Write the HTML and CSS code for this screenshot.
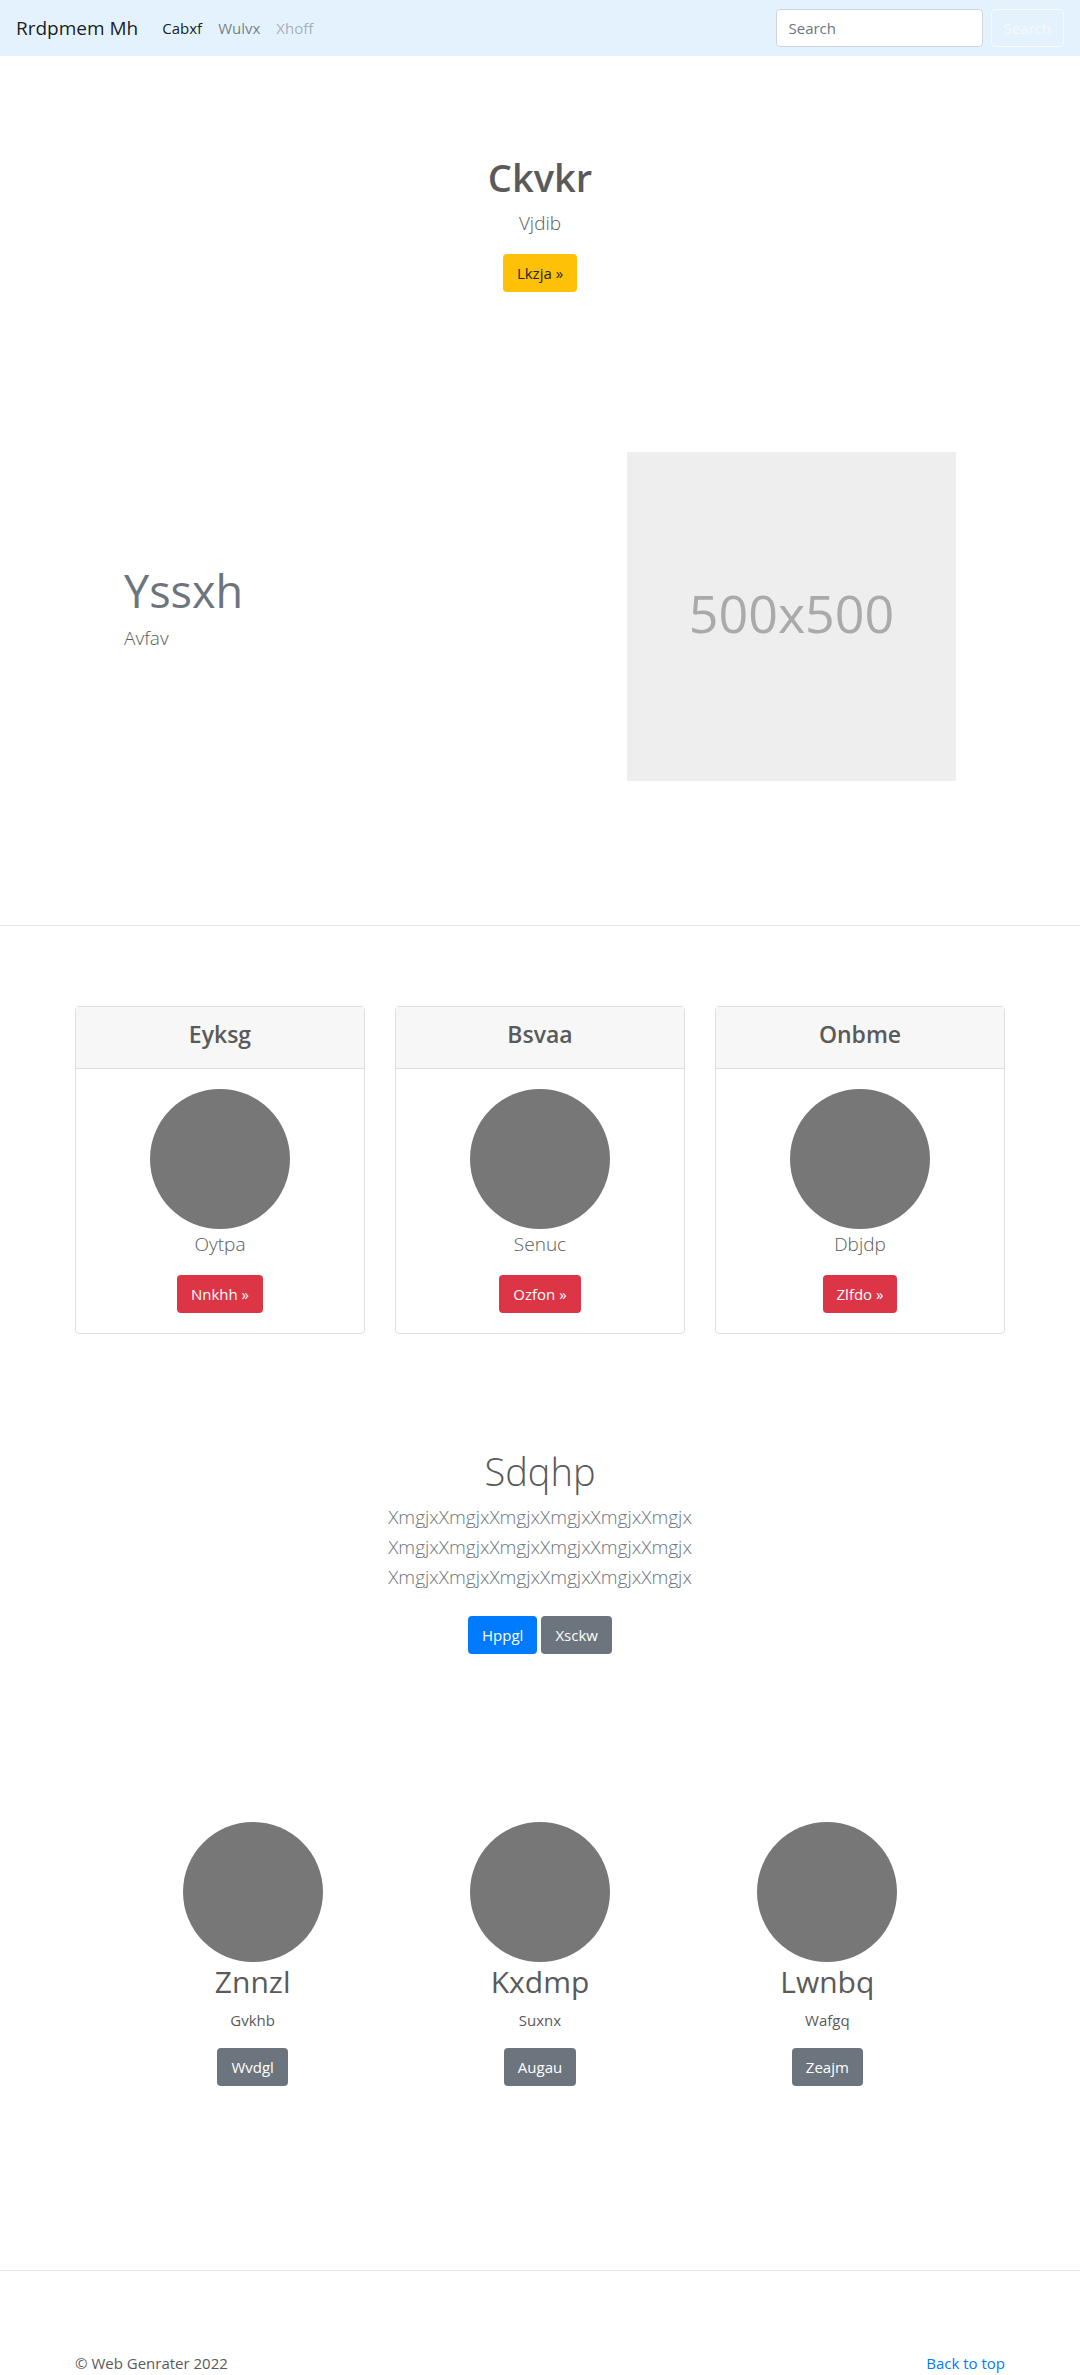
FILE: index.html
```html
<!DOCTYPE html>
<html lang="en">
<head>
  <meta charset="utf-8">
  <meta name="viewport" content="width=device-width, initial-scale=1">
  <title>Rrdpmem Mh</title>
  <link rel="stylesheet" href="styles.css">
</head>
<body id="top">
  <header class="navbar">
    <a class="brand" href="#top">Rrdpmem Mh</a>
    <nav class="nav">
      <a class="nav-link nav-link-active" href="#">Cabxf</a>
      <a class="nav-link" href="#">Wulvx</a>
      <a class="nav-link nav-link-disabled" href="#">Xhoff</a>
    </nav>
    <form class="search">
      <input class="search-input" type="search" placeholder="Search" aria-label="Search">
      <button class="btn btn-outline" type="button">Search</button>
    </form>
  </header>

  <main>
    <section class="hero">
      <h1 class="title title-bold">Ckvkr</h1>
      <p class="lead">Vjdib</p>
      <button class="btn btn-warning" type="button">Lkzja »</button>
    </section>

    <section class="feature">
      <div class="feature-text">
        <h2 class="feature-title">Yssxh</h2>
        <p class="lead">Avfav</p>
      </div>
      <div class="placeholder">500x500</div>
    </section>

    <hr class="divider">

    <section class="cards">
      <article class="card">
        <header class="card-header"><h4 class="card-title">Eyksg</h4></header>
        <div class="card-body">
          <div class="circle"></div>
          <p class="lead">Oytpa</p>
          <button class="btn btn-danger" type="button">Nnkhh »</button>
        </div>
      </article>
      <article class="card">
        <header class="card-header"><h4 class="card-title">Bsvaa</h4></header>
        <div class="card-body">
          <div class="circle"></div>
          <p class="lead">Senuc</p>
          <button class="btn btn-danger" type="button">Ozfon »</button>
        </div>
      </article>
      <article class="card">
        <header class="card-header"><h4 class="card-title">Onbme</h4></header>
        <div class="card-body">
          <div class="circle"></div>
          <p class="lead">Dbjdp</p>
          <button class="btn btn-danger" type="button">Zlfdo »</button>
        </div>
      </article>
    </section>

    <section class="album">
      <h1 class="title title-light">Sdqhp</h1>
      <p class="lead lead-muted">XmgjxXmgjxXmgjxXmgjxXmgjxXmgjx<br>XmgjxXmgjxXmgjxXmgjxXmgjxXmgjx<br>XmgjxXmgjxXmgjxXmgjxXmgjxXmgjx</p>
      <div class="actions">
        <button class="btn btn-primary" type="button">Hppgl</button>
        <button class="btn btn-secondary" type="button">Xsckw</button>
      </div>
    </section>

    <section class="columns">
      <div class="column">
        <div class="circle"></div>
        <h2 class="column-title">Znnzl</h2>
        <p class="text">Gvkhb</p>
        <button class="btn btn-secondary" type="button">Wvdgl</button>
      </div>
      <div class="column">
        <div class="circle"></div>
        <h2 class="column-title">Kxdmp</h2>
        <p class="text">Suxnx</p>
        <button class="btn btn-secondary" type="button">Augau</button>
      </div>
      <div class="column">
        <div class="circle"></div>
        <h2 class="column-title">Lwnbq</h2>
        <p class="text">Wafgq</p>
        <button class="btn btn-secondary" type="button">Zeajm</button>
      </div>
    </section>
  </main>

  <hr class="divider">

  <footer class="footer">
    <span>© Web Genrater 2022</span>
    <a class="footer-link" href="#top">Back to top</a>
  </footer>
</body>
</html>
```
FILE: styles.css
```css
* {
  box-sizing: border-box;
}

body {
  margin: 0;
  background: #fff;
  color: #5a5a5a;
  font-family: "Open Sans", "Noto Sans", sans-serif;
  font-size: 15px;
  line-height: 24px;
}

h1, h2, h4, p {
  margin: 0;
}

a {
  text-decoration: none;
}

/* Navigation bar */
.navbar {
  display: flex;
  align-items: center;
  padding: 9px 16px;
  background: #e3f2fd;
}

.brand {
  margin-right: 16px;
  color: rgba(0, 0, 0, 0.9);
  font-size: 19px;
  line-height: 30px;
}

.nav {
  display: flex;
}

.nav-link {
  padding: 0 8px;
  color: rgba(0, 0, 0, 0.5);
}

.nav-link-active {
  color: rgba(0, 0, 0, 0.9);
}

.nav-link-disabled {
  color: rgba(0, 0, 0, 0.3);
}

.search {
  display: flex;
  gap: 8px;
  margin-left: auto;
}

.search-input {
  width: 207px;
  height: 38px;
  padding: 6px 12px;
  border: 1px solid #ced4da;
  border-radius: 4px;
  background: #fff;
  color: #495057;
  font: inherit;
  appearance: none;
}

.search-input::placeholder {
  color: #6c757d;
  opacity: 1;
}

/* Buttons */
.btn {
  padding: 6px 13px;
  border: 1px solid transparent;
  border-radius: 4px;
  color: #fff;
  font: inherit;
  cursor: pointer;
}

.btn-outline {
  padding: 6px 12px;
  border-color: #f8f9fa;
  background: transparent;
  color: #f8f9fa;
}

.btn-warning {
  background: #ffc107;
  color: #212529;
}

.btn-danger {
  background: #dc3545;
}

.btn-primary {
  background: #007bff;
}

.btn-secondary {
  background: #6c757d;
}

/* Shared text */
.title {
  margin-bottom: 6px;
  font-size: 38px;
  line-height: 50px;
}

.title-bold {
  font-weight: 600;
}

.title-light {
  font-weight: 300;
}

.lead {
  margin-bottom: 16px;
  font-size: 19px;
  font-weight: 300;
  line-height: 30px;
}

.lead-muted {
  color: #6c757d;
}

.text {
  margin-bottom: 16px;
}

.divider {
  margin: 0;
  border: 0;
  border-top: 1px solid #e5e5e5;
}

.circle {
  width: 140px;
  height: 140px;
  border-radius: 50%;
  background: #777;
}

/* Hero */
.hero {
  display: flex;
  flex-direction: column;
  align-items: center;
  padding: 96px 16px;
}

/* Feature row */
.feature {
  display: flex;
  align-items: center;
  justify-content: space-between;
  max-width: 832px;
  margin: 0 auto;
  padding: 64px 0 144px;
}

.feature-title {
  margin-bottom: 6px;
  color: #6c757d;
  font-size: 45px;
  font-weight: 400;
  line-height: 52px;
}

.placeholder {
  display: flex;
  flex: 0 1 329px;
  align-items: center;
  justify-content: center;
  aspect-ratio: 1;
  padding-bottom: 8px;
  background: #eee;
  color: #aaa;
  font-size: 52px;
  line-height: 60px;
}

/* Cards */
.cards {
  display: grid;
  grid-template-columns: repeat(3, 1fr);
  gap: 30px;
  max-width: 930px;
  margin: 0 auto;
  padding-top: 80px;
}

.card {
  border: 1px solid #dfdfdf;
  border-radius: 4px;
  text-align: center;
}

.card-header {
  padding: 12px 20px 18px;
  border-bottom: 1px solid #dfdfdf;
  background: #f7f7f7;
}

.card-title {
  font-size: 23px;
  font-weight: 600;
  line-height: 31px;
}

.card-body {
  display: flex;
  flex-direction: column;
  align-items: center;
  padding: 20px;
}

/* Album intro */
.album {
  display: flex;
  flex-direction: column;
  align-items: center;
  padding: 112px 16px 168px;
  text-align: center;
}

.actions {
  display: flex;
  gap: 4px;
  padding-top: 8px;
}

/* Three columns */
.columns {
  display: grid;
  grid-template-columns: repeat(3, 1fr);
  max-width: 862px;
  margin: 0 auto;
  padding-bottom: 184px;
}

.column {
  display: flex;
  flex-direction: column;
  align-items: center;
}

.column-title {
  margin-bottom: 6px;
  font-size: 30px;
  font-weight: 400;
  line-height: 40px;
}

/* Footer */
.footer {
  display: flex;
  justify-content: space-between;
  max-width: 930px;
  margin: 0 auto;
  padding-top: 80px;
}

.footer-link {
  color: #007bff;
}
```
